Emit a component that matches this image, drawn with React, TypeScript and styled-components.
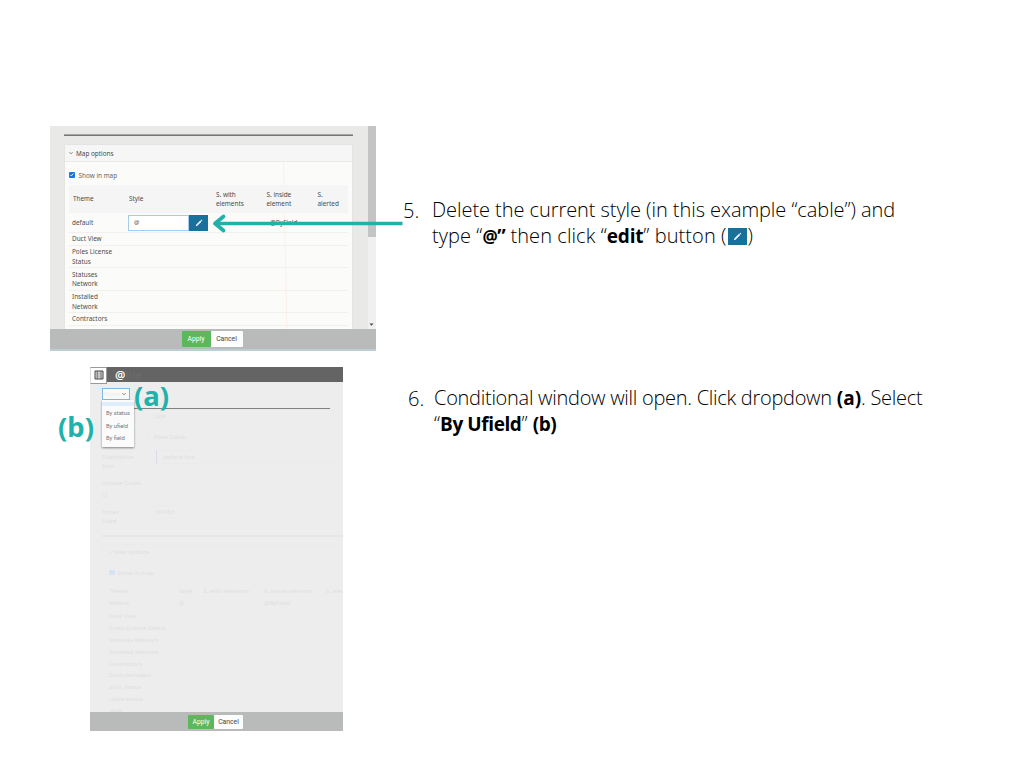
import React from 'react';
import styled, { createGlobalStyle } from 'styled-components';

const GlobalStyle = createGlobalStyle`
  * { box-sizing: border-box; }
  body { margin: 0; background: #fff; font-family: "Noto Sans", "Open Sans", sans-serif; }
`;

const teal = '#20b2aa';

const Page = styled.main`
  width: 1024px;
  height: 768px;
  overflow: hidden;
  padding: 126px 0 0 50px;
  display: flex;
  flex-direction: column;
  gap: 16px;
  background: #fff;
`;

const Step = styled.section<{ $inset?: number }>`
  position: relative;
  display: flex;
  align-items: flex-start;
  padding-left: ${p => p.$inset ?? 0}px;
`;

/* ---- instruction text ---- */

const Note = styled.div<{ $top: number; $left: number; $gap: number }>`
  display: grid;
  grid-template-columns: ${p => p.$gap}px auto;
  margin: ${p => p.$top}px 0 0 ${p => p.$left}px;
  font-family: "Open Sans", "Noto Sans", sans-serif;
  font-size: 20px;
  font-weight: 300;
  line-height: 26px;
  color: #000;
  white-space: nowrap;
`;

const Line = styled.div<{ $spacing?: number }>`
  height: 26px;
  letter-spacing: ${p => p.$spacing ?? 0}px;
`;

const Strong = styled.b<{ $spacing?: number; $size?: number }>`
  font-weight: 700;
  font-size: ${p => p.$size ?? 19}px;
  letter-spacing: ${p => p.$spacing ?? -0.5}px;
`;

const StepNumber = styled.div`
  padding-top: 1px;
`;

const InlineEdit = styled.span`
  display: inline-flex;
  align-items: center;
  justify-content: center;
  width: 19px;
  height: 17px;
  margin: 0 1px 2px 1px;
  background: #17719b;
  vertical-align: middle;
`;

const Arrow = styled.svg`
  position: absolute;
  left: 162px;
  top: 87px;
`;

const Callout = styled.span<{ $x: number; $y: number }>`
  position: absolute;
  left: ${p => p.$x}px;
  top: ${p => p.$y}px;
  font: 700 27.500px/34px "Noto Sans", sans-serif;
  color: ${teal};
`;

/* ---- shared panel parts ---- */

const Footer = styled.footer<{ $h: number }>`
  height: ${p => p.$h}px;
  flex: none;
  display: flex;
  justify-content: center;
  align-items: center;
  padding-right: 2px;
  background: #b9baba;
`;

const Button = styled.span<{ $primary?: boolean; $w: number; $h: number }>`
  width: ${p => p.$w}px;
  height: ${p => p.$h}px;
  display: flex;
  align-items: center;
  justify-content: center;
  border-radius: 1px;
  font-family: Roboto, sans-serif;
  font-size: 6.8px;
  color: ${p => (p.$primary ? '#fff' : '#444')};
  background: ${p => (p.$primary ? '#5cb85c' : '#fdfdfd')};
`;

const Check = styled.span<{ $faint?: boolean }>`
  width: 5.5px;
  height: 5.5px;
  border-radius: 1px;
  display: flex;
  background: ${p => (p.$faint ? '#d6e3f2' : '#1976e8')};
`;

/* ---- map options panel ---- */

const MapPanel = styled.div`
  width: 326px;
  height: 225px;
  display: flex;
  flex-direction: column;
  background: #e9eae8;
  border-bottom: 2px solid #bccdd3;
  overflow: hidden;
  font-size: 6.4px;
  color: #4c4c4c;
`;

const MapBody = styled.div`
  height: 203px;
  flex: none;
  display: flex;
  justify-content: space-between;
  padding-left: 14px;
  overflow: hidden;
`;

const Sheet = styled.div`
  width: 289px;
  padding-top: 8px;
`;

const Rule = styled.div`
  height: 2px;
  background: linear-gradient(#a5a5a3 50%, #777 50%);
`;

const Card = styled.div`
  margin-top: 8px;
  height: 200px;
  border: 1px solid #e4e5e3;
  background: linear-gradient(88.800deg, #fbfcfa 0 76%, #fdeee8 76.300%, #fbfcfa 76.700%);
`;

const CardTitle = styled.div`
  height: 17px;
  display: flex;
  align-items: center;
  gap: 3px;
  padding-left: 4px;
  background: #f5f6f5;
  border-bottom: 1px solid #e9eae9;
`;

const ShowRow = styled.div`
  height: 23px;
  padding: 3px 0 0 4px;
  display: flex;
  align-items: center;
  gap: 4px;
  color: #666;
`;

const cols = '56px 87px 50.5px 51px 1fr';

const TableHead = styled.div`
  display: grid;
  grid-template-columns: ${cols};
  align-items: center;
  height: 28px;
  margin: 0 4px;
  padding-left: 4px;
  line-height: 9.5px;
  background: #f4f5f4;
`;

const Row = styled.div<{ $h: number }>`
  height: ${p => p.$h}px;
  margin: 0 4px;
  padding-left: 3px;
  display: grid;
  grid-template-columns: 56px 86px 56px 1fr;
  align-items: center;
  line-height: 9.3px;
  border-bottom: 1px solid #f0f1ef;
  white-space: pre;
`;

const StyleField = styled.div`
  width: 80px;
  height: 16px;
  display: flex;
  align-items: stretch;
`;

const StyleInput = styled.div`
  flex: 1;
  display: flex;
  align-items: center;
  padding-left: 5px;
  font-size: 6px;
  border: 1px solid #a3cbf3;
  background: #fff;
`;

const EditButton = styled.div`
  width: 19px;
  display: flex;
  align-items: center;
  justify-content: center;
  background: #17719b;
`;

const Scrollbar = styled.div`
  width: 8px;
  display: flex;
  flex-direction: column;
  justify-content: space-between;
  align-items: center;
  background: #eff0ef;
`;

const Thumb = styled.div`
  width: 8px;
  height: 111px;
  background: #c3c4c3;
`;

/* ---- conditional window ---- */

const Conditional = styled.div`
  position: relative;
  width: 253px;
  height: 364px;
  display: flex;
  flex-direction: column;
  background: #ededed;
  font-size: 6px;
  color: #dfe0e0;
  overflow: hidden;
`;

const TitleBar = styled.header`
  height: 15px;
  flex: none;
  display: flex;
  align-items: center;
  background: #646464;
  color: #fff;
  font-size: 11.500px;
  font-weight: 600;
  line-height: 15px;
`;

const IconBox = styled.div`
  width: 17px;
  height: 17px;
  margin: 1px 8px 0 0;
  display: flex;
  align-items: center;
  justify-content: center;
  background: #fff;
  border: 1px solid #999;
  border-left-color: #ddd;
`;

const GhostTitle = styled.span`
  color: #6c6c6c;
  font-weight: 400;
`;

const ConditionalBody = styled.div`
  height: 330px;
  flex: none;
  padding: 6px 0 0 12px;
  overflow: hidden;
`;

const Select = styled.div`
  width: 28px;
  height: 12px;
  display: flex;
  align-items: center;
  justify-content: space-between;
  padding: 0 3px 0 1px;
  background: #f8f9f9;
  border: 1px solid #7fb9ec;
`;

const GhostLabel = styled.span`
  color: #efefef;
`;

const Menu = styled.div`
  position: absolute;
  left: 12px;
  top: 33px;
  width: 32px;
  height: 47px;
  padding-top: 2px;
  background: #fbfbfb;
  box-shadow: 0 1px 2px rgba(0, 0, 0, 0.45);
  color: #777;
  font: 5.8px/12.7px Roboto, sans-serif;
`;

const MenuBlank = styled.div`
  height: 4px;
  margin-bottom: 1px;
  background: #dfeefa;
`;

const MenuItem = styled.div`
  padding-left: 4px;
`;

const Divider = styled.div`
  width: 228px;
  height: 1px;
  margin: 8px 0 3px;
  background: #818181;
`;

const Field = styled.div<{ $h: number }>`
  height: ${p => p.$h}px;
  display: grid;
  grid-template-columns: 46px 1fr;
  line-height: 8.5px;
`;

const FieldValue = styled.div<{ $mark?: boolean }>`
  height: 14px;
  padding-left: ${p => (p.$mark ? 6 : 5)}px;
  margin: -3px 0 0 ${p => (p.$mark ? 8 : 0)}px;
  line-height: 12px;
  border: 1px solid #ebebeb;
  border-left: 1px solid ${p => (p.$mark ? '#d9dbee' : '#ebebeb')};
  border-right: 0;
`;

const EmptyCheck = styled.span`
  display: block;
  width: 5px;
  height: 5px;
  margin-top: 4px;
  border: 1px solid #e7e7e7;
`;

const FaintRule = styled.div`
  height: 2px;
  background: #e6e6e6;
`;

const FaintCard = styled.div`
  height: 190px;
  margin-top: 7px;
  padding-left: 6px;
  border: 1px solid #ebebeb;
  border-right: 0;
`;

const FaintLine = styled.div<{ $h: number; $gap?: number }>`
  height: ${p => p.$h}px;
  display: flex;
  align-items: center;
  gap: ${p => p.$gap ?? 3}px;
`;

const FaintRow = styled.div<{ $h?: number }>`
  height: ${p => p.$h ?? 11.9}px;
  display: grid;
  grid-template-columns: 70px 24px 61px 62px 40px;
  align-items: center;
  white-space: nowrap;
`;

const Pencil = ({ size = 8 }: { size?: number }) => (
  <svg width={size} height={size} viewBox="0 0 10 10">
    <path d="M1 9l.5-1.800L6.700 2l1.300 1.300L2.800 8.500zM7.200 1.500l.8-.8L9.300 2l-.8.8z" fill="#fff" />
  </svg>
);

const Chevron = ({ color = '#666' }: { color?: string }) => (
  <svg width="4" height="4" viewBox="0 0 4 4">
    <path d="M.4 1.2L2 2.8l1.6-1.6" fill="none" stroke={color} strokeWidth=".8" />
  </svg>
);

const Tick = () => (
  <svg width="5.5" height="5.5" viewBox="0 0 6 6">
    <path d="M1.3 3.1l1.2 1.2 2.2-2.6" fill="none" stroke="#fff" strokeWidth=".9" />
  </svg>
);

const themes: [string, number][] = [
  ['Duct View', 13],
  ['Poles License\nStatus', 22.4],
  ['Statuses\nNetwork', 22.6],
  ['Installed\nNetwork', 22.4],
  ['Contractors', 12.4],
];

const faintThemes = [
  'Duct View', 'Poles License Status', 'Statuses Network', 'Installed Network', 'Contractors',
  'Duct-damaged', 'duct_status', 'cable-status', 'draft',
];

export default function App() {
  return (
    <>
      <GlobalStyle />
      <Page>
        <Step>
          <MapPanel>
            <MapBody>
              <Sheet>
                <Rule />
                <Card>
                  <CardTitle><Chevron />Map options</CardTitle>
                  <ShowRow><Check><Tick /></Check>Show in map</ShowRow>
                  <TableHead>
                    <span>Theme</span>
                    <span>Style</span>
                    <span>S. with<br />elements</span>
                    <span>S. inside<br />element</span>
                    <span>S.<br />alerted</span>
                  </TableHead>
                  <Row $h={20}>
                    <span>default</span>
                    <StyleField>
                      <StyleInput>@</StyleInput>
                      <EditButton><Pencil /></EditButton>
                    </StyleField>
                    <span />
                    <span>@ByField</span>
                  </Row>
                  {themes.map(([name, h]) => (
                    <Row key={name} $h={h}><span>{name}</span></Row>
                  ))}
                </Card>
              </Sheet>
              <Scrollbar>
                <Thumb />
                <svg width="8" height="8" viewBox="0 0 8 8">
                  <path d="M1.500 2.500h4L3.500 4.800z" fill="#444" />
                </svg>
              </Scrollbar>
            </MapBody>
            <Footer $h={20}>
              <Button $primary $w={29} $h={16}>Apply</Button>
              <Button $w={32} $h={16}>Cancel</Button>
            </Footer>
          </MapPanel>
          <Arrow width="192" height="22" viewBox="0 0 192 22">
            <path d="M190.500 10.500H4" fill="none" stroke={teal} strokeWidth="3.600" />
            <path d="M11.500 3.500L3 10.500L11.500 17.500" fill="none" stroke={teal} strokeWidth="3.800" strokeLinecap="round" strokeLinejoin="round" />
          </Arrow>
          <Note $top={71} $left={27} $gap={29}>
            <StepNumber>5.</StepNumber>
            <div>
              <Line $spacing={-0.06}>Delete the current style (in this example “cable”) and</Line>
              <Line $spacing={0.08}>type “<Strong $size={17}>@</Strong><Strong>”</Strong> then click “<Strong $spacing={-0.2}>edit</Strong>” button (<InlineEdit><Pencil size={9} /></InlineEdit>)</Line>
            </div>
          </Note>
        </Step>

        <Step $inset={40}>
          <Conditional>
            <TitleBar>
              <IconBox>
                <svg width="10" height="10" viewBox="0 0 10 10">
                  <path d="M1 1h8v8H1z" fill="#ddd" stroke="#444" />
                  <path d="M3.200 1v8M7 1v8" fill="none" stroke="#555" strokeWidth=".9" />
                  <path d="M3.600 3.200h3M3.600 5h3M3.600 6.800h3" stroke="#999" strokeWidth=".6" />
                </svg>
              </IconBox>
              @<GhostTitle>ble</GhostTitle>
            </TitleBar>
            <ConditionalBody>
              <Select><GhostLabel>Name</GhostLabel><Chevron /></Select>
              <Divider />
              <Field $h={21}><span>Type</span><FieldValue>Link</FieldValue></Field>
              <Field $h={20}><span>Type</span><FieldValue>Fibre Cable</FieldValue></Field>
              <Field $h={26}><span>Descriptive<br />Icon</span><FieldValue $mark>default line</FieldValue></Field>
              <Field $h={29}><span>Unique Codes<EmptyCheck /></span></Field>
              <Field $h={27}><span>Times<br />Used</span><FieldValue>167063</FieldValue></Field>
              <FaintRule />
              <FaintCard>
                <FaintLine $h={14} $gap={1}><Chevron color="#dedede" />Map options</FaintLine>
                <FaintLine $h={27}><Check $faint />Show in map</FaintLine>
                <FaintRow $h={9}>
                  <span>Theme</span><span>Style</span><span>S. with elements</span><span>S. inside element</span><span>S. alerted</span>
                </FaintRow>
                <FaintRow $h={15}><span>default</span><span>@</span><span /><span>@ByField</span></FaintRow>
                {faintThemes.map(name => <FaintRow key={name}><span>{name}</span></FaintRow>)}
              </FaintCard>
            </ConditionalBody>
            <Footer $h={19}>
              <Button $primary $w={26} $h={14}>Apply</Button>
              <Button $w={29} $h={14}>Cancel</Button>
            </Footer>
            <Menu>
              <MenuBlank />
              <MenuItem>By status</MenuItem>
              <MenuItem>By ufield</MenuItem>
              <MenuItem>By field</MenuItem>
            </Menu>
          </Conditional>
          <Callout $x={84} $y={12}>(a)</Callout>
          <Callout $x={8} $y={43}>(b)</Callout>
          <Note $top={18} $left={65} $gap={26}>
            <StepNumber>6.</StepNumber>
            <div>
              <Line $spacing={-0.28}>Conditional window will open. Click dropdown <Strong $spacing={0}>(a)</Strong>. Select</Line>
              <Line>“<Strong $spacing={-0.4}>By Ufield</Strong>” <Strong>(b)</Strong></Line>
            </div>
          </Note>
        </Step>
      </Page>
    </>
  );
}
